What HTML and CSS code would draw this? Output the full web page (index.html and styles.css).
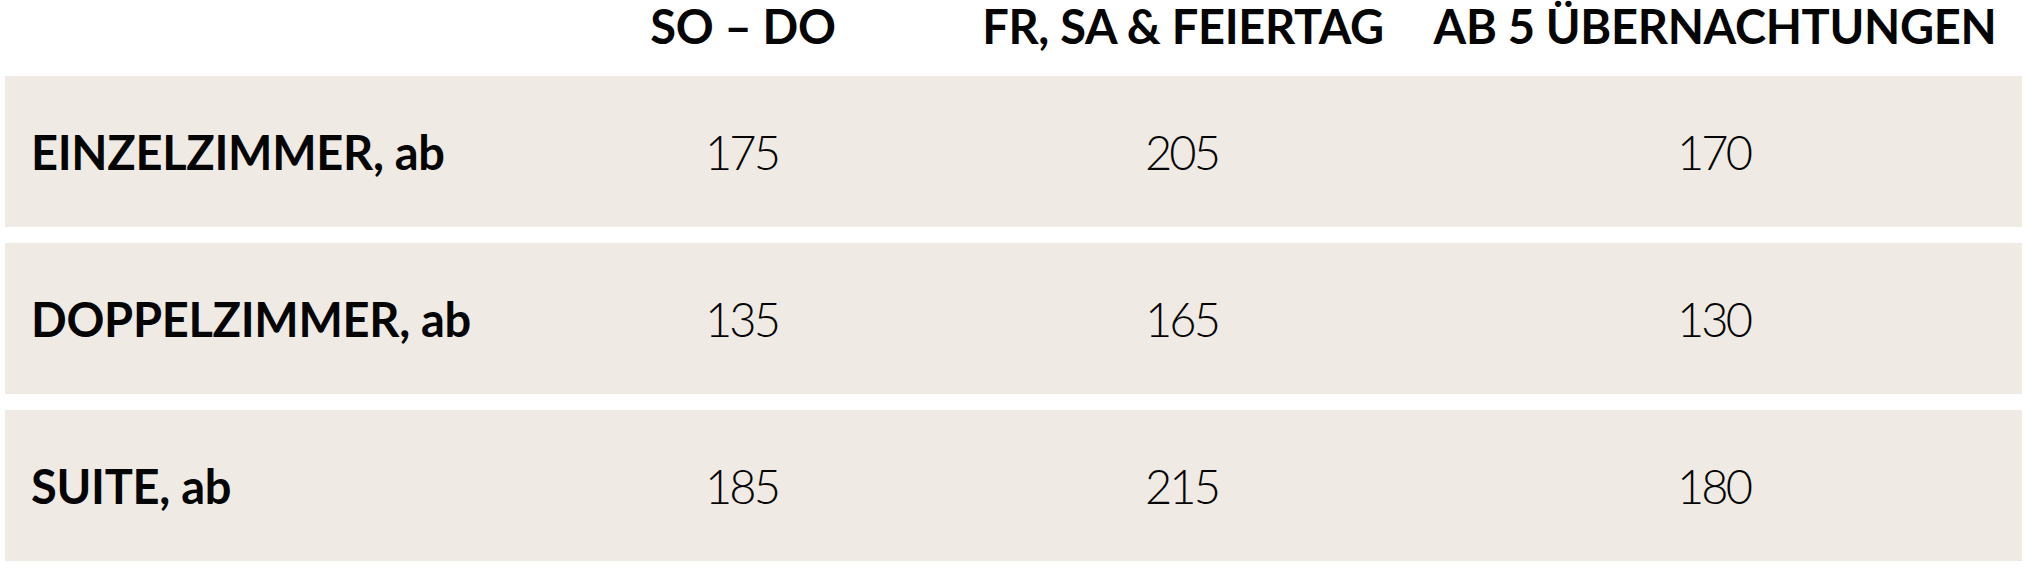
FILE: index.html
```html
<!DOCTYPE html>
<html lang="de">
<head>
<meta charset="utf-8">
<title>Preise</title>
<link rel="stylesheet" href="styles.css">
</head>
<body>
<div class="price-table">
  <div class="row head">
    <div class="cell label"></div>
    <div class="cell">SO – DO</div>
    <div class="cell">FR, SA &amp; FEIERTAG</div>
    <div class="cell">AB 5 ÜBERNACHTUNGEN</div>
  </div>
  <div class="row band">
    <div class="cell label">EINZELZIMMER, ab</div>
    <div class="cell num">175</div>
    <div class="cell num">205</div>
    <div class="cell num">170</div>
  </div>
  <div class="row band">
    <div class="cell label">DOPPELZIMMER, ab</div>
    <div class="cell num">135</div>
    <div class="cell num">165</div>
    <div class="cell num">130</div>
  </div>
  <div class="row band">
    <div class="cell label">SUITE, ab</div>
    <div class="cell num">185</div>
    <div class="cell num">215</div>
    <div class="cell num">180</div>
  </div>
</div>
</body>
</html>
```

FILE: styles.css
```css
html, body {
  margin: 0;
  padding: 0;
  background: #ffffff;
}

body {
  font-family: Lato, "Liberation Sans", sans-serif;
  color: #050505;
}

.price-table {
  width: 2017px;
  margin-left: 5px;
  display: flex;
  flex-direction: column;
  gap: 16px;
}

.row {
  display: grid;
  grid-template-columns: 523px 430px 450px 1fr;
  align-items: center;
}

.cell {
  text-align: center;
  font-size: 47px;
  white-space: nowrap;
}

.head {
  line-height: 52px;
  height: 52px;
  margin-bottom: 8px;
}

.head .cell {
  font-weight: 700;
  letter-spacing: -0.3px;
}

.band {
  height: 151px;
  background: #efebe4;
}

.cell.label {
  text-align: left;
  padding-left: 26px;
  font-weight: 700;
  letter-spacing: -0.3px;
}

.cell.num {
  font-weight: 300;
  letter-spacing: -3px;
  padding-right: 3px;
}
```
